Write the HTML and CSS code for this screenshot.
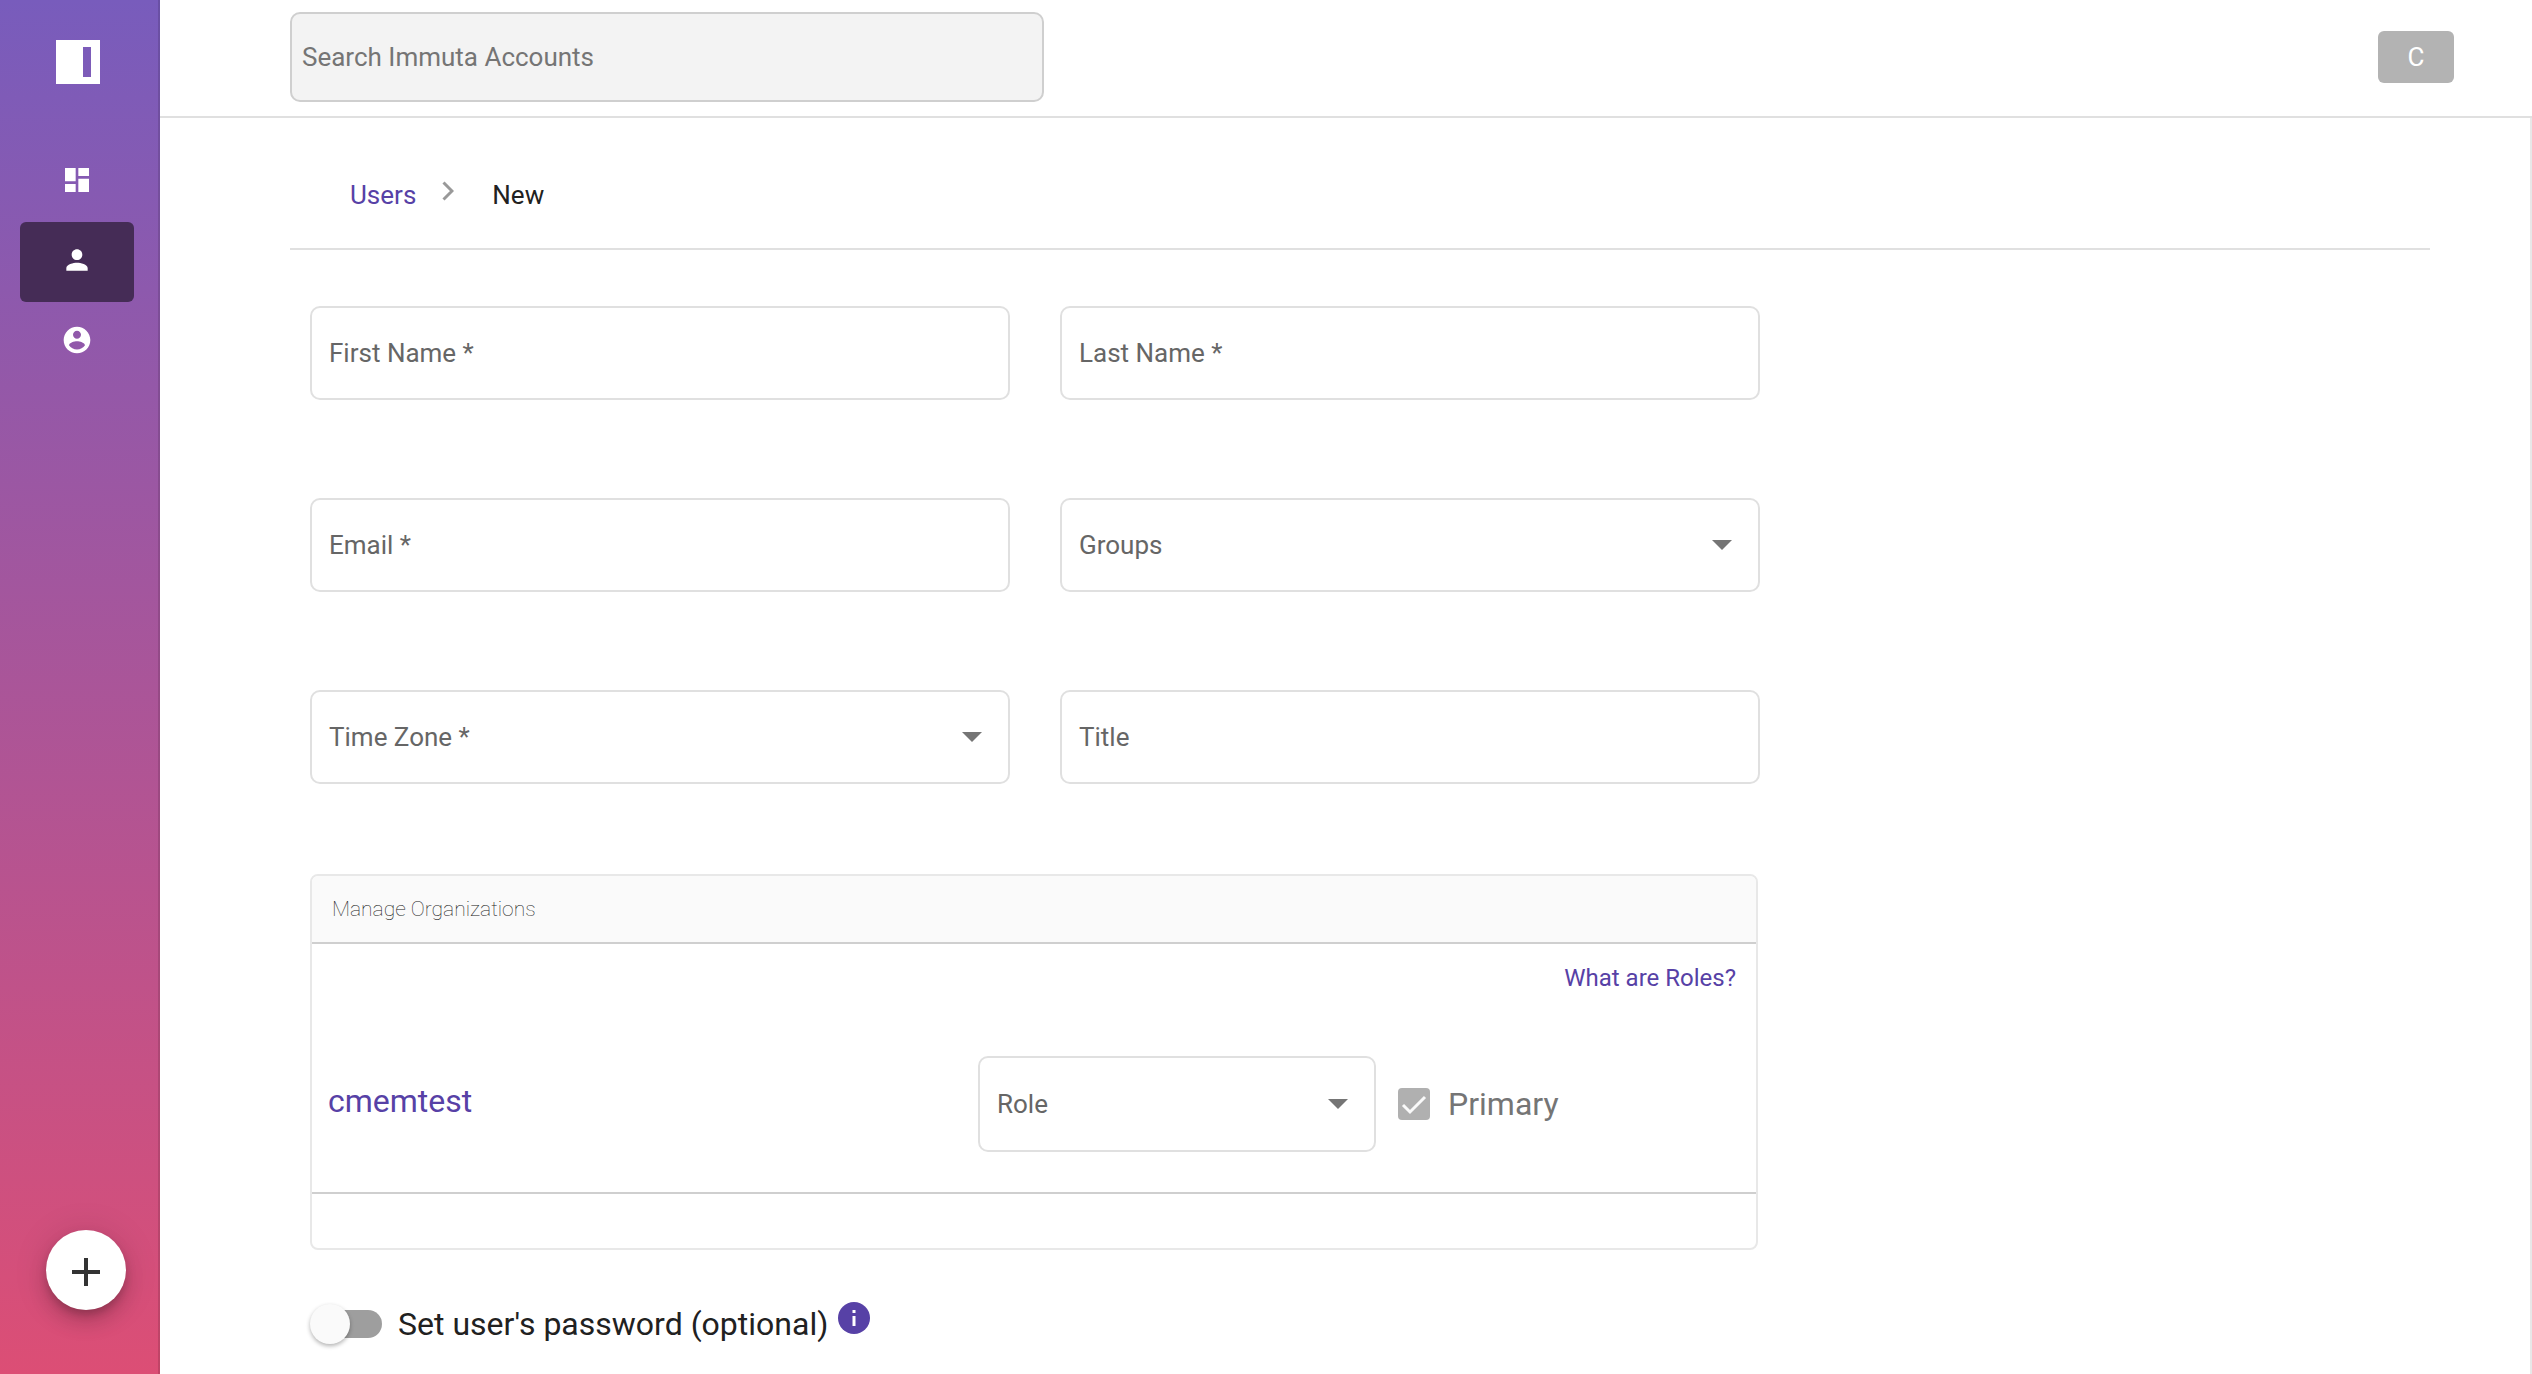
FILE: index.html
```html
<!DOCTYPE html>
<html lang="en">
<head>
<meta charset="utf-8">
<meta name="viewport" content="width=device-width, initial-scale=1">
<title>New User - Immuta Accounts</title>
<link rel="stylesheet" href="styles.css">
</head>
<body>
<div class="app">
  <aside class="sidebar">
    <a class="logo" href="#" aria-label="Immuta">
      <svg viewBox="0 0 44 44" width="44" height="44"><path fill="#fff" fill-rule="evenodd" d="M0 0h44v44H0zM27 7v30h8V7z"/></svg>
    </a>
    <nav class="nav">
      <a class="nav-item" href="#" aria-label="Dashboard">
        <svg class="icon" viewBox="0 0 24 24"><path d="M3 13h8V3H3v10zm0 8h8v-6H3v6zm10 0h8V11h-8v10zm0-18v6h8V3h-8z"/></svg>
      </a>
      <a class="nav-item nav-item-active" href="#" aria-label="Users">
        <svg class="icon" viewBox="0 0 24 24"><path d="M12 12c2.21 0 4-1.79 4-4s-1.79-4-4-4-4 1.790-4 4 1.790 4 4 4zm0 2c-2.670 0-8 1.340-8 4v2h16v-2c0-2.660-5.330-4-8-4z"/></svg>
      </a>
      <a class="nav-item" href="#" aria-label="Account">
        <svg class="icon" viewBox="0 0 24 24"><path d="M12 2C6.480 2 2 6.480 2 12s4.480 10 10 10 10-4.480 10-10S17.520 2 12 2zm0 3c1.660 0 3 1.340 3 3s-1.340 3-3 3-3-1.340-3-3 1.340-3 3-3zm0 14.200c-2.500 0-4.710-1.280-6-3.220.03-1.990 4-3.080 6-3.080 1.990 0 5.970 1.090 6 3.080-1.290 1.940-3.500 3.220-6 3.220z"/></svg>
      </a>
    </nav>
    <button class="fab" type="button" aria-label="Add">
      <svg viewBox="0 0 28 28" width="28" height="28"><path fill="#333" d="M12 0h4v12h12v4H16v12h-4V16H0v-4h12z"/></svg>
    </button>
  </aside>

  <div class="page">
    <header class="topbar">
      <input class="search" type="search" placeholder="Search Immuta Accounts" aria-label="Search Immuta Accounts">
      <button class="avatar" type="button">C</button>
    </header>

    <main class="content">
      <nav class="breadcrumb" aria-label="Breadcrumb">
        <a class="link" href="#">Users</a>
        <svg class="chevron" viewBox="0 0 12 20" width="12" height="20"><path d="M1.500 1.500 10 10l-8.500 8.500" fill="none" stroke="#999" stroke-width="3"/></svg>
        <span>New</span>
      </nav>

      <form class="form">
        <div class="fields">
          <label class="field"><span class="field-label">First Name *</span><input class="field-control" type="text"></label>
          <label class="field"><span class="field-label">Last Name *</span><input class="field-control" type="text"></label>
          <label class="field"><span class="field-label">Email *</span><input class="field-control" type="email"></label>
          <label class="field"><span class="field-label">Groups</span><select class="field-control"><option></option></select><svg class="caret" viewBox="0 0 20 10"><path d="M0 0h20L10 10z"/></svg></label>
          <label class="field"><span class="field-label">Time Zone *</span><select class="field-control"><option></option></select><svg class="caret" viewBox="0 0 20 10"><path d="M0 0h20L10 10z"/></svg></label>
          <label class="field"><span class="field-label">Title</span><input class="field-control" type="text"></label>
        </div>

        <section class="card">
          <h2 class="card-title">Manage Organizations</h2>
          <div class="card-body">
            <a class="link roles-link" href="#">What are Roles?</a>
            <div class="org">
              <a class="link org-name" href="#">cmemtest</a>
              <label class="field"><span class="field-label">Role</span><select class="field-control"><option></option></select><svg class="caret" viewBox="0 0 20 10"><path d="M0 0h20L10 10z"/></svg></label>
              <label class="primary">
                <span class="checkbox">
                  <input class="checkbox-input" type="checkbox" checked disabled>
                  <svg class="checkmark" viewBox="0 0 32 32"><path d="m5 17 7 7L27 9" fill="none" stroke="#fafafa" stroke-width="3"/></svg>
                </span>
                Primary
              </label>
            </div>
          </div>
          <div class="card-footer"></div>
        </section>

        <div class="password">
          <label class="toggle"><input class="switch" type="checkbox" role="switch">Set user's password (optional)</label>
          <button class="info" type="button" aria-label="Password information">
            <svg viewBox="0 0 32 32" width="32" height="32"><circle cx="16" cy="16" r="16" fill="#5741a6"/><path fill="#fff" d="M14.500 8h3v3h-3zM14.500 14h3v10h-3z"/></svg>
          </button>
        </div>
      </form>
    </main>
  </div>
</div>
</body>
</html>
```

FILE: styles.css
```css
* {
  box-sizing: border-box;
}

body {
  margin: 0;
  background: #fff;
  color: #212121;
  font-family: Roboto, "Liberation Sans", sans-serif;
  font-size: 26px;
  line-height: 32px;
}

button,
input,
select {
  margin: 0;
  font: inherit;
}

svg {
  display: block;
}

.app {
  display: flex;
  min-height: 100vh;
}

/* Sidebar */
.sidebar {
  position: sticky;
  top: 0;
  display: flex;
  flex: none;
  flex-direction: column;
  width: 160px;
  height: 100vh;
  padding: 40px 24px 64px 20px;
  border-right: 2px solid rgba(0, 0, 0, 0.12);
  background: linear-gradient(#785cbc, #dc4e75) border-box;
}

.logo {
  align-self: center;
  padding-left: 2px;
}

.nav {
  margin-top: 58px;
}

.nav-item {
  display: flex;
  align-items: center;
  justify-content: center;
  height: 80px;
  padding-bottom: 4px;
  border-radius: 6px;
}

.nav-item-active {
  background: #452c56;
}

.icon {
  width: 32px;
  height: 32px;
  fill: #fff;
}

.fab {
  display: flex;
  align-items: center;
  justify-content: center;
  align-self: flex-end;
  width: 80px;
  height: 80px;
  margin-top: auto;
  margin-right: 8px;
  padding: 4px 0 0;
  border: 0;
  border-radius: 50%;
  background: #fff;
  box-shadow: 0 6px 10px -2px rgba(0, 0, 0, 0.2), 0 12px 20px rgba(0, 0, 0, 0.14), 0 2px 36px rgba(0, 0, 0, 0.12);
}

/* Page frame */
.page {
  display: flex;
  flex: 1;
  flex-direction: column;
  min-width: 0;
}

.topbar {
  display: flex;
  align-items: center;
  justify-content: space-between;
  height: 118px;
  padding: 0 78px 2px 130px;
  border-bottom: 2px solid #e0e0e0;
}

.search {
  width: 754px;
  height: 90px;
  padding: 0 10px;
  border: 2px solid #cfcfcf;
  border-radius: 10px;
  background: #f3f3f3;
}

.search::placeholder {
  color: #757575;
  opacity: 1;
}

.avatar {
  width: 76px;
  height: 52px;
  padding: 0;
  border: 0;
  border-radius: 6px;
  background: #b3b3b3;
  color: #fff;
}

.content {
  flex: 1;
  padding: 0 100px 30px 130px;
  border-right: 2px solid #e8e8e8;
}

.link {
  color: #5741a6;
  text-decoration: none;
}

.breadcrumb {
  display: flex;
  align-items: center;
  height: 132px;
  padding: 24px 60px 0;
  border-bottom: 2px solid #e0e0e0;
}

.chevron {
  margin: 0 38px 8px 26px;
}

/* Form */
.form {
  max-width: 1490px;
  padding: 56px 20px 0;
}

.fields {
  display: grid;
  grid-template-columns: 1fr 1fr;
  gap: 98px 50px;
}

.field {
  display: grid;
  align-items: center;
  height: 94px;
  border: 2px solid #e0e0e0;
  border-radius: 10px;
}

.field-label,
.field-control,
.caret {
  grid-area: 1 / 1;
}

.field-label {
  padding-left: 17px;
  color: #666;
}

.field-control {
  width: 100%;
  height: 100%;
  padding: 0 17px;
  border: 0;
  border-radius: 8px;
  background: transparent;
  appearance: none;
}

.caret {
  justify-self: end;
  width: 20px;
  height: 10px;
  margin-right: 26px;
  fill: #757575;
  pointer-events: none;
}

.card {
  margin: 90px 2px 0 0;
  border: 2px solid #e8e8e8;
  border-radius: 8px;
}

.card-title {
  margin: 0;
  padding: 17px 20px;
  border-bottom: 2px solid #cfcfcf;
  border-radius: 6px 6px 0 0;
  background: #fafafa;
  font-size: 21px;
  font-weight: 100;
}

.card-body {
  display: flex;
  flex-direction: column;
  padding: 18px 20px 40px 16px;
  border-bottom: 2px solid #cfcfcf;
}

.roles-link {
  align-self: flex-end;
  font-size: 24px;
}

.org {
  display: grid;
  grid-template-columns: 634fr 398fr 344fr;
  align-items: center;
  gap: 16px;
  margin-top: 62px;
}

.org .field {
  height: 96px;
}

.org-name,
.primary,
.password {
  font-size: 32px;
}

.org-name {
  padding-bottom: 6px;
}

.primary {
  display: flex;
  align-items: center;
  gap: 18px;
  color: #757575;
}

.checkbox {
  display: grid;
  margin-left: 6px;
}

.checkbox-input,
.checkmark {
  grid-area: 1 / 1;
  width: 32px;
  height: 32px;
}

.checkbox-input {
  border-radius: 4px;
  background: #b0b0b0;
  appearance: none;
}

.card-footer {
  height: 54px;
}

.password {
  display: flex;
  align-items: flex-start;
  gap: 10px;
  margin-top: 52px;
}

.toggle {
  display: flex;
  align-items: center;
  gap: 16px;
  height: 44px;
}

.switch {
  display: flex;
  align-items: center;
  width: 72px;
  height: 28px;
  border-radius: 14px;
  background: linear-gradient(#9e9e9e, #9e9e9e) 4px 0 no-repeat;
  appearance: none;
}

.switch::before {
  flex: none;
  width: 40px;
  height: 40px;
  border-radius: 50%;
  background: #fafafa;
  box-shadow: 0 2px 4px rgba(0, 0, 0, 0.3);
  content: "";
}

.info {
  padding: 0;
  border: 0;
  background: none;
  line-height: 0;
}
```
